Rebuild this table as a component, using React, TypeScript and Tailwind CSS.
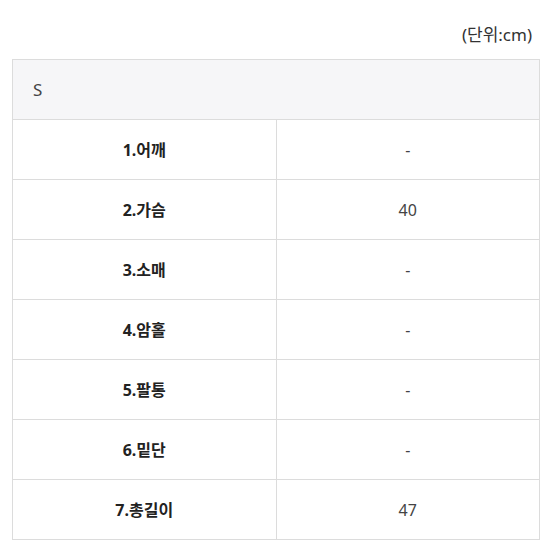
const rows = [
  { label: '1.어깨', value: '-' },
  { label: '2.가슴', value: '40' },
  { label: '3.소매', value: '-' },
  { label: '4.암홀', value: '-' },
  { label: '5.팔통', value: '-' },
  { label: '6.밑단', value: '-' },
  { label: '7.총길이', value: '47' },
];

const App = () => {
  return (
    <div
      className="w-[554px] h-[554px] bg-white pt-[23px]"
      style={{ fontFamily: '"Noto Sans", "Noto Sans CJK KR", sans-serif' }}
    >
      {/* Unit */}
      <div className="flex justify-end pr-[22px] h-[24px] items-center text-[17px] text-[#333]">
        (단위:cm)
      </div>

      {/* Size table */}
      <table className="ml-[12px] mt-[12px] w-[528px] border-collapse table-fixed">
        <thead>
          <tr>
            <th
              colSpan={2}
              className="h-[60px] bg-[#f6f6f8] border border-[#dcdcdc] text-left pl-[20px] font-normal text-[17px] text-[#444]"
            >
              S
            </th>
          </tr>
        </thead>
        <tbody>
          {rows.map((row) => (
            <tr key={row.label}>
              <td className="w-[264px] h-[60px] border border-[#dcdcdc] text-center font-bold text-[16px] text-[#222]">
                {row.label}
              </td>
              <td className="h-[60px] border border-[#dcdcdc] text-center text-[16px] text-[#444]">
                {row.value}
              </td>
            </tr>
          ))}
        </tbody>
      </table>
    </div>
  );
};

export default App;
